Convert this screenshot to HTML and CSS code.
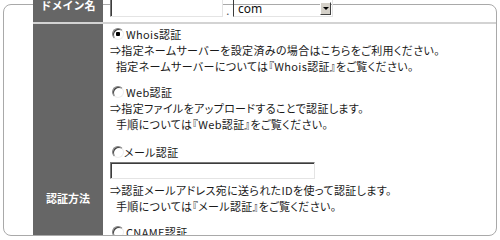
FILE: index.html
```html
<!DOCTYPE html>
<html>
<head>
	<title>ドメイン認証</title>
	<meta charset="utf-8">
	<link rel="stylesheet" href="styles.css">
</head>
<body>

	<div class="frame">
		<div class="clip">
			<table class="form">
				<tr class="row-domain">
					<th>ドメイン名</th>
					<td>
						<div class="domain">
							<input type="text" class="field field-domain">
							<span class="dot">.</span>
							<span class="select">
								<span class="select-value">com</span>
								<span class="select-btn"></span>
							</span>
						</div>
					</td>
				</tr>
				<tr class="row-auth">
					<th>認証方法</th>
					<td>
						<div class="option">
							<label class="choice"><input type="radio" class="radio" name="auth" checked>Whois認証</label>
							<p>⇒指定ネームサーバーを設定済みの場合はこちらをご利用ください。</p>
							<p class="note">指定ネームサーバーについては『Whois認証』をご覧ください。</p>
						</div>
						<div class="option">
							<label class="choice"><input type="radio" class="radio" name="auth">Web認証</label>
							<p>⇒指定ファイルをアップロードすることで認証します。</p>
							<p class="note">手順については『Web認証』をご覧ください。</p>
						</div>
						<div class="option option-mail">
							<label class="choice choice-tight"><input type="radio" class="radio" name="auth">メール認証</label>
							<input type="text" class="field field-mail">
							<p>⇒認証メールアドレス宛に送られたIDを使って認証します。</p>
							<p class="note">手順については『メール認証』をご覧ください。</p>
						</div>
						<div class="option">
							<label class="choice"><input type="radio" class="radio" name="auth">CNAME認証</label>
						</div>
					</td>
				</tr>
			</table>
		</div>
	</div>
</body>
</html>
```

FILE: styles.css
```css
body{
	margin: 0;
	background: #fff;
	font-family: "Noto Sans CJK JP", "Noto Sans", sans-serif;
	font-size: 11px;
	color: #1a1a1a;
}
/* 外枠：角丸の枠線。表は上にはみ出し、下は枠の内側で切れる */
.frame{
	width: 494px;
	height: 232px;
	margin: 4px 0 0 3px;
	border: 1px solid #a9a9a9;
	border-radius: 8px;
	box-sizing: border-box;
}
.clip{
	height: 240px;
	margin: -10px 0 0 29px;
	overflow: hidden;
}
.form{
	width: 100%;
	border-spacing: 0;
	table-layout: fixed;
}
.form th{
	width: 70px;
	padding: 0;
	background: #666;
	color: #fff;
	font-weight: bold;
	font-size: 11px;
	line-height: 16px;
	text-align: center;
}
.form td{
	padding: 2px 0 0 7px;
	vertical-align: top;
	line-height: 16px;
	font-feature-settings: "palt";
	letter-spacing: 0.35px;
}
.row-domain th,
.row-domain td{
	border-bottom: 2px solid #d3d3d3;
}
.row-domain th{
	vertical-align: top;
	padding-top: 2px;
}
.row-domain td{
	padding-bottom: 5px;
}
.row-auth{
	height: 348px;
}
.row-auth th{
	vertical-align: middle;
}

/* 入力欄：旧Windows風のへこんだ枠 */
.field{
	display: block;
	margin: 0;
	padding: 0;
	box-sizing: border-box;
	background: #fff;
	border: 1px solid;
	border-color: #7a7a7a #e4e4e4 #e4e4e4 #7a7a7a;
	box-shadow: inset 1px 1px #3c3c3c;
	outline: none;
}
.domain{
	display: flex;
	align-items: flex-end;
	height: 20px;
}
.field-domain{
	width: 113px;
	height: 20px;
}
.dot{
	width: 10px;
	text-align: center;
	line-height: 14px;
	color: #555;
}
.select{
	display: flex;
	align-items: center;
	width: 100px;
	height: 20px;
	box-sizing: border-box;
	border: 1px solid;
	border-color: #7a7a7a #e4e4e4 #e4e4e4 #3c3c3c;
	padding: 0 1px 0 4px;
	font-family: "Noto Sans", sans-serif;
	font-size: 12px;
	letter-spacing: 0;
	color: #111;
}
.select-value{
	flex: 1;
	line-height: 14px;
	padding-top: 3px;
}
.select-btn{
	position: relative;
	width: 11px;
	height: 13px;
	margin-top: 3px;
	background: #d4d0c8;
	border: 1px solid;
	border-color: #fff #404040 #404040 #fff;
	box-sizing: border-box;
}
.select-btn:after{
	content: "";
	position: absolute;
	left: 2px;
	top: 4px;
	border-left: 3px solid transparent;
	border-right: 3px solid transparent;
	border-top: 3px solid #000;
}

/* 認証方法の選択肢 */
.option{
	margin-bottom: 10px;
}
.option-mail{
	margin-top: 12px;
}
.option p{
	margin: 0;
	white-space: nowrap;
}
.note{
	padding-left: 6px;
}
.choice{
	display: flex;
	align-items: center;
	height: 16px;
}
.radio{
	appearance: none;
	width: 12px;
	height: 12px;
	margin: 0 2px 0 2px;
	border-radius: 50%;
	border: 1px solid;
	border-color: #808080 #eee #eee #808080;
	box-shadow: inset 1px 1px #404040;
	background: #fff;
	box-sizing: border-box;
}
.radio:checked{
	background: radial-gradient(circle, #000 2px, #fff 2.5px);
}
.choice-tight .radio{
	margin-right: 0;
}
.field-mail{
	width: 205px;
	height: 17px;
	margin: 2px 0 3px;
}
```
